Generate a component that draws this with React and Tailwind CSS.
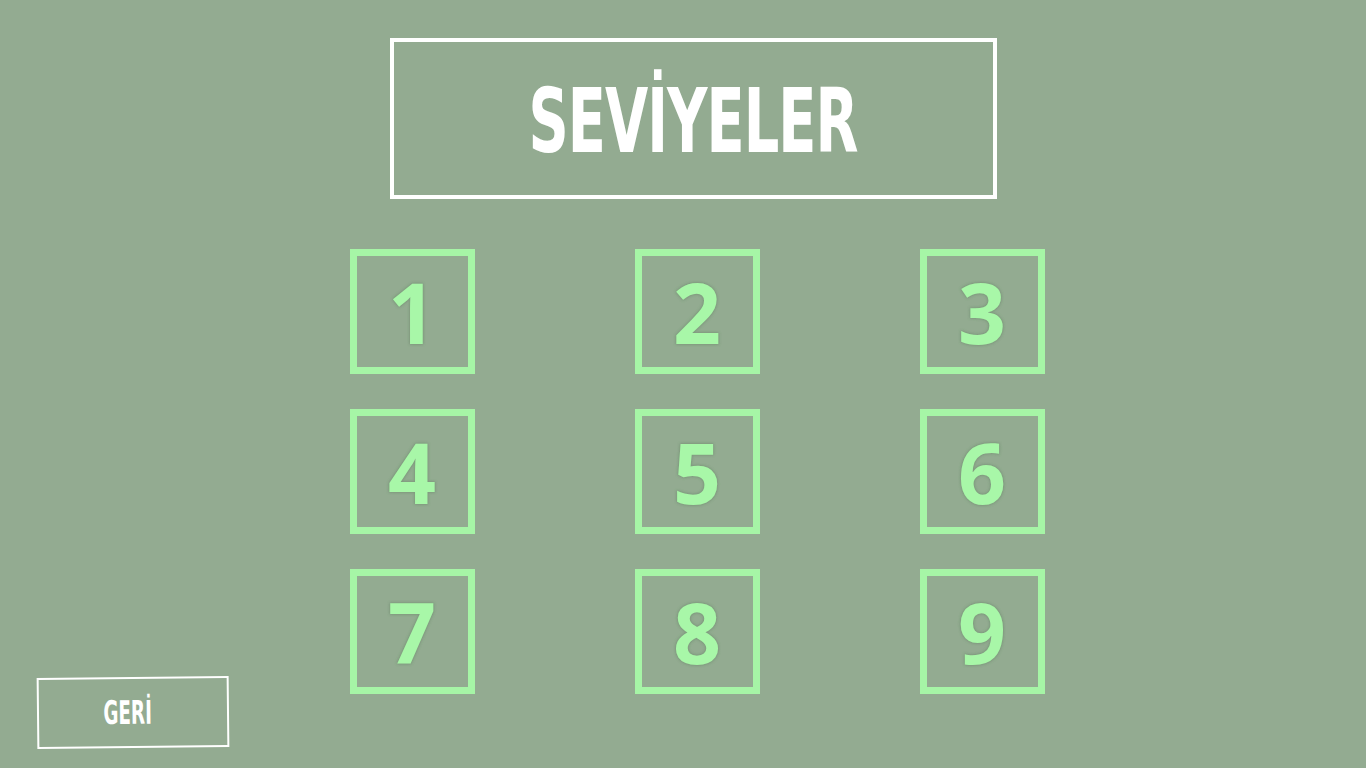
import React from 'react';

const levels = [1, 2, 3, 4, 5, 6, 7, 8, 9];

function LevelBox({ n }) {
  return (
    <button className="w-[125px] h-[125px] border-[7px] border-[#a6f5a6] flex items-center justify-center">
      <span
        className="text-[#a8f7a8] text-[84px] font-bold leading-none [font-family:'Open_Sans','DejaVu_Sans',sans-serif] [text-shadow:0_0_3px_#7f9a7e,0_0_3px_#7f9a7e,0_0_2px_#7f9a7e]"
      >
        {n}
      </span>
    </button>
  );
}

export default function App() {
  return (
    <div className="w-[1366px] h-[768px] bg-[#93ab91] overflow-hidden flex flex-col">
      <div className="flex justify-center pl-[21px] pt-[38px]">
        <div className="w-[607px] h-[161px] border-4 border-white flex items-center justify-center">
          <h1 className="text-white text-[66px] font-extrabold leading-none scale-y-[1.35] scale-x-[0.94] translate-y-[3px] tracking-[-1px] [font-family:'Liberation_Sans_Narrow','DejaVu_Sans_Condensed',sans-serif]">
            SEVİYELER
          </h1>
        </div>
      </div>

      <div className="flex justify-center pl-[28px] mt-[50px]">
        <div className="grid grid-cols-3 gap-x-[160px] gap-y-[35px]">
          {levels.map((n) => (
            <LevelBox key={n} n={n} />
          ))}
        </div>
      </div>

      <div className="pl-[37px] -mt-[17px]">
        <button className="w-[192px] h-[71px] border-2 border-white -rotate-[0.6deg] flex items-center justify-center">
          <span className="text-white text-[24px] font-bold scale-y-[1.35] scale-x-[0.85] -translate-x-[5px] [font-family:'Liberation_Sans_Narrow','DejaVu_Sans_Condensed',sans-serif]">
            GERİ
          </span>
        </button>
      </div>
    </div>
  );
}
